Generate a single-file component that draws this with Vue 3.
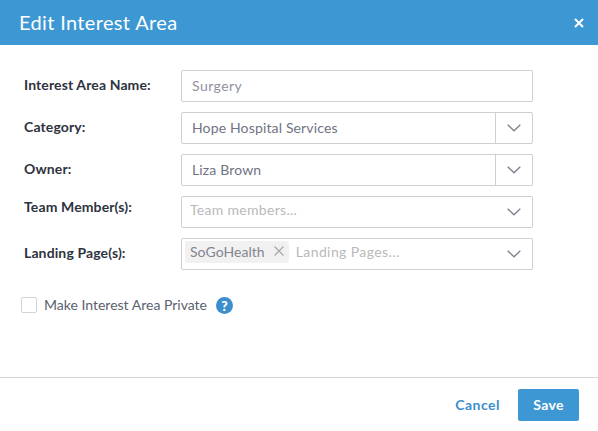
<script setup>
const fields = [
  { label: 'Interest Area Name:', kind: 'input', value: 'Surgery' },
  { label: 'Category:', kind: 'select', value: 'Hope Hospital Services' },
  { label: 'Owner:', kind: 'select', value: 'Liza Brown' },
  { label: 'Team Member(s):', kind: 'multi', placeholder: 'Team members...', top: true },
  { label: 'Landing Page(s):', kind: 'multi', tag: 'SoGoHealth', placeholder: 'Landing Pages...' }
]
</script>

<template>
  <div class="modal">
    <header class="head">
      <h1 class="title">Edit Interest Area</h1>
      <svg class="close" viewBox="0 0 10 10" width="10" height="10"><path d="M1 1l8 8M9 1l-8 8" stroke="#fff" stroke-width="2" fill="none"/></svg>
    </header>
    <main class="body">
      <div v-for="f in fields" :key="f.label" class="row">
        <label class="label" :class="{ top: f.top }">{{ f.label }}</label>
        <div class="control">
          <span v-if="f.kind !== 'multi'" class="value" :class="{ muted: f.kind === 'input' }">{{ f.value }}</span>
          <template v-else>
            <span v-if="f.tag" class="tag">{{ f.tag }}<svg class="tag-x" viewBox="0 0 10 10" width="10" height="10"><path d="M.5.5l9 9M9.5.5l-9 9" stroke="#a9a9ad" stroke-width="1.3" fill="none"/></svg></span>
            <span class="placeholder" :class="{ tagged: f.tag }">{{ f.placeholder }}</span>
          </template>
          <span v-if="f.kind !== 'input'" class="arrow" :class="{ split: f.kind === 'select' }">
            <svg viewBox="0 0 14 8" width="14" height="8"><path d="M.7.8L7 6.8 13.3.8" stroke="#7d7f8e" stroke-width="1.3" fill="none"/></svg>
          </span>
        </div>
      </div>
      <div class="private">
        <span class="check"></span>
        <span class="private-text">Make Interest Area Private</span>
        <span class="help">?</span>
      </div>
    </main>
    <footer class="foot">
      <a class="cancel">Cancel</a>
      <button class="save">Save</button>
    </footer>
  </div>
</template>

<style scoped>
.modal {
  width: 598px;
  height: 431px;
  background: #fff;
  display: flex;
  flex-direction: column;
  font-family: Lato, "Liberation Sans", sans-serif;
  overflow: hidden;
}
.head {
  height: 45px;
  flex: none;
  background: #3d97d3;
  display: flex;
  align-items: center;
  justify-content: space-between;
  padding: 0 14px 0 19px;
  box-sizing: border-box;
}
.title {
  margin: 0;
  padding-bottom: 2px;
  color: #fff;
  font-size: 20px;
  font-weight: 400;
  letter-spacing: 0.35px;
}
.body {
  flex: 1;
  padding: 25px 65px 0 24px;
  display: flex;
  flex-direction: column;
  gap: 10px;
}
.row {
  display: flex;
  align-items: center;
  height: 32px;
}
.label {
  width: 157px;
  flex: none;
  padding-bottom: 3px;
  font-size: 14px;
  font-weight: 700;
  letter-spacing: 0.12px;
  color: #2e3340;
}
.label.top {
  align-self: flex-start;
  margin-top: 2px;
}
.control {
  flex: 1;
  height: 32px;
  box-sizing: border-box;
  border: 1px solid #cfcfcf;
  border-radius: 2px;
  display: flex;
  align-items: center;
  position: relative;
}
.value {
  padding: 0 0 2px 10px;
  font-size: 14px;
  letter-spacing: 0.15px;
  color: #6f7384;
  flex: 1;
}
.value.muted {
  color: #8f929f;
  letter-spacing: 0.45px;
}
.placeholder {
  font-size: 14px;
  letter-spacing: 0.3px;
  color: #b9b9b9;
  padding: 0 0 5px 8px;
  flex: 1;
}
.placeholder.tagged {
  padding-left: 7px;
  letter-spacing: 0.4px;
}
.tag {
  margin-left: 3px;
  height: 22px;
  padding: 0 5px 2px;
  box-sizing: border-box;
  background: #f1f1f1;
  border-radius: 2px;
  display: flex;
  align-items: center;
  gap: 9px;
  font-size: 14px;
  letter-spacing: 0.05px;
  color: #83858f;
  margin-bottom: 4px;
}
.arrow {
  width: 37px;
  height: 100%;
  flex: none;
  box-sizing: border-box;
  display: flex;
  align-items: center;
  justify-content: center;
}
.arrow.split {
  border-left: 1px solid #cfcfcf;
}
.private {
  display: flex;
  align-items: center;
  margin: 16px 0 0 -3px;
  height: 18px;
}
.check {
  width: 16px;
  height: 16px;
  box-sizing: border-box;
  border: 1px solid #d4d4d4;
  border-radius: 2px;
}
.private-text {
  margin-left: 7px;
  padding-bottom: 2px;
  font-size: 14px;
  color: #5b5f6e;
}
.help {
  margin-left: 9px;
  width: 17px;
  height: 17px;
  border-radius: 50%;
  background: #3d8fcc;
  color: #fff;
  font-size: 14px;
  font-weight: 900;
  display: flex;
  align-items: center;
  justify-content: center;
}
.foot {
  height: 54px;
  flex: none;
  box-sizing: border-box;
  border-top: 1px solid #d5d5d5;
  display: flex;
  align-items: center;
  justify-content: flex-end;
  padding: 0 19px 0 0;
  gap: 18px;
}
.cancel {
  color: #3d8fcc;
  font-size: 14px;
  font-weight: 700;
  letter-spacing: 0.5px;
}
.save {
  width: 61px;
  height: 32px;
  border: 0;
  border-radius: 2px;
  background: #3d97d3;
  color: #fff;
  letter-spacing: 0.3px;
  font: 700 14px Lato, "Liberation Sans", sans-serif;
}
</style>
